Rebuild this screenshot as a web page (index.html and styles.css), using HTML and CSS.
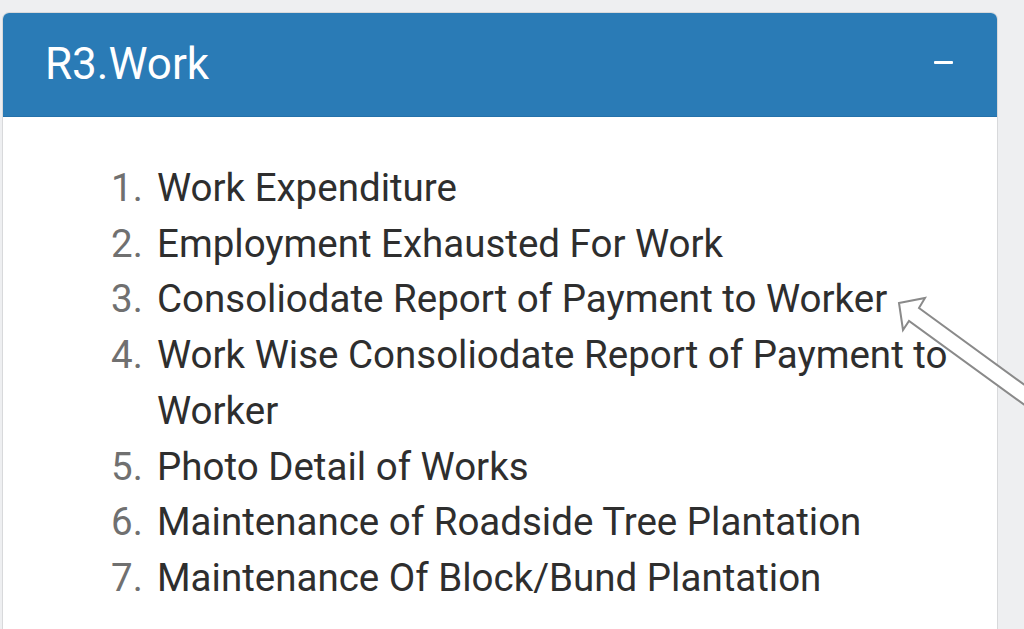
FILE: index.html
```html
<!DOCTYPE html>
<html lang="en">
<head>
<meta charset="utf-8">
<title>R3.Work</title>
<link rel="stylesheet" href="styles.css">
</head>
<body>
<div class="page">
  <section class="card">
    <header class="card-header">
      <h2 class="card-title">R3.Work</h2>
      <span class="collapse-btn" aria-label="collapse"></span>
    </header>
    <div class="card-body">
      <ol class="report-list">
        <li><span class="num">1.</span><span class="txt">Work Expenditure</span></li>
        <li><span class="num">2.</span><span class="txt">Employment Exhausted For Work</span></li>
        <li><span class="num">3.</span><span class="txt">Consoliodate Report of Payment to Worker</span></li>
        <li><span class="num">4.</span><span class="txt">Work Wise Consoliodate Report of Payment to Worker</span></li>
        <li><span class="num">5.</span><span class="txt">Photo Detail of Works</span></li>
        <li><span class="num">6.</span><span class="txt">Maintenance of Roadside Tree Plantation</span></li>
        <li><span class="num">7.</span><span class="txt">Maintenance Of Block/Bund Plantation</span></li>
      </ol>
    </div>
  </section>
  <svg class="pointer-arrow" width="144" height="150" viewBox="0 0 144 150" aria-hidden="true">
    <polygon points="19,23 45,18 39,28 146,106 146,126 29,41 23,50" fill="#ffffff" stroke="#8a8a8a" stroke-width="2" stroke-linejoin="miter"/>
  </svg>
</div>
</body>
</html>
```

FILE: styles.css
```css
html, body {
  margin: 0;
  padding: 0;
}
body {
  background: #eeeff1;
  font-family: Roboto, "Noto Sans", "Liberation Sans", sans-serif;
  overflow: hidden;
}
.page {
  position: relative;
  height: 629px;
  padding: 12px 0 0 2px;
  box-sizing: border-box;
}
.card {
  width: 996px;
  height: 640px;
  background: #ffffff;
  border: 1px solid #d8d9db;
  border-radius: 7px 7px 0 0;
  box-sizing: border-box;
  overflow: hidden;
}
.card-header {
  height: 104px;
  background: #2a7bb6;
  display: flex;
  align-items: center;
  justify-content: space-between;
  padding: 0 44px 0 42px;
  border-bottom: 1px solid #2571aa;
  box-sizing: border-box;
}
.card-title {
  margin: 0;
  font-weight: 400;
  font-size: 44px;
  color: #ffffff;
  padding-bottom: 2px;
}
.collapse-btn {
  display: block;
  width: 19px;
  height: 3px;
  background: #ffffff;
  border-radius: 1px;
  margin-bottom: 4px;
}
.card-body {
  padding: 43px 38px 0 108px;
}
.report-list {
  list-style: none;
  margin: 0;
  padding: 0;
  font-size: 38.5px;
  line-height: 55.7px;
}
.report-list li {
  display: flex;
}
.num {
  flex: 0 0 46px;
  color: #707070;
}
.txt {
  flex: 1;
  color: #2e2e2e;
}
.pointer-arrow {
  position: absolute;
  left: 880px;
  top: 280px;
}
```
